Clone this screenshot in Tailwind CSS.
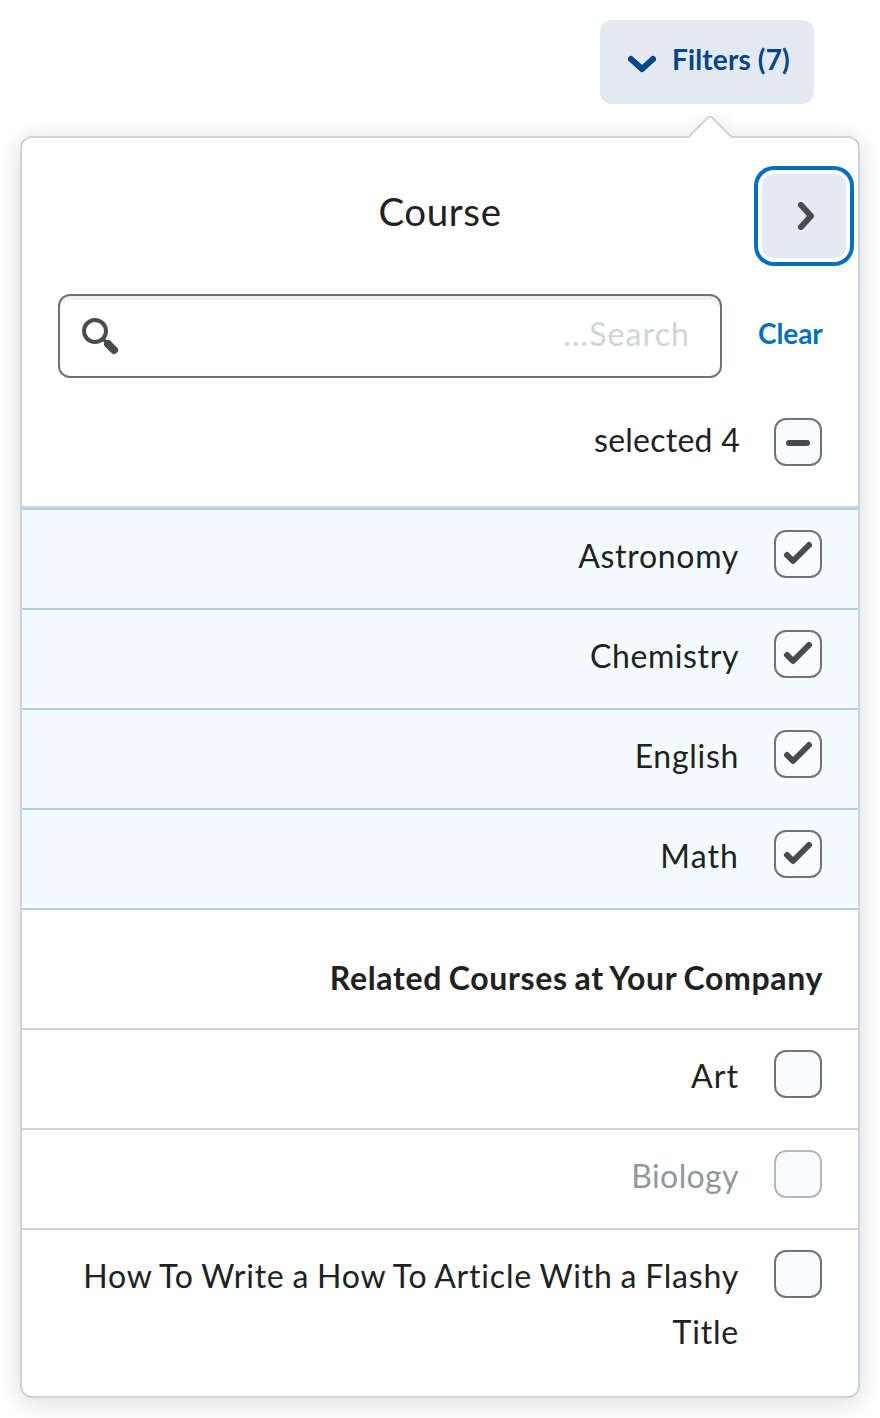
<!DOCTYPE html>
<html lang="en">
<head>
<meta charset="utf-8">
<title>Filters</title>
<script src="https://cdn.jsdelivr.net/npm/@tailwindcss/browser@4"></script>
</head>
<body class="h-[1418px] overflow-hidden bg-white font-['Lato',sans-serif] text-[32px] leading-[56px] tracking-[0.7px] text-[#202122]">
<main class="flex flex-col px-5 pt-5">
  <button class="mr-[46px] flex h-[84px] w-[214px] items-center self-end rounded-[12px] bg-[#e3e9f1] pl-7 text-[28px] font-bold tracking-[0.15px] text-[#004489]">
    <svg class="mt-1 h-[28px] w-[28px] shrink-0" viewBox="0 0 28 28" fill="none" stroke="#004489" stroke-width="6" stroke-linecap="round" stroke-linejoin="round"><path d="M3 9l11 10L25 9"/></svg>
    <span class="ml-4 whitespace-nowrap pb-[6px]">Filters (7)</span>
  </button>
  <section class="relative mt-8 flex h-[1262px] flex-col rounded-[12px] border-2 border-[#cdd5dc] bg-white shadow-[0_4px_24px_rgba(0,0,0,0.15)]">
    <div class="absolute -top-[26px] left-[664px] h-[26px] w-[48px] overflow-hidden">
      <div class="absolute left-[7px] top-[9px] h-[34px] w-[34px] rotate-45 rounded-[5px] border-2 border-[#cdd5dc] bg-white shadow-[-8px_-8px_24px_-10px_rgba(73,76,78,0.2)]"></div>
    </div>
    <header class="grid h-[156px] grid-cols-[1fr_auto_1fr] items-center px-3">
      <h1 class="col-start-2 pb-[10px] text-[38.5px] tracking-[0.6px]">Course</h1>
      <button class="flex h-[84px] w-[84px] items-center justify-center justify-self-end rounded-[12px] bg-[#e3e9f1] shadow-[0_0_0_4px_#fff,0_0_0_8px_#006fbf]">
        <svg class="ml-[3px] h-[28px] w-[28px]" viewBox="0 0 28 28" fill="none" stroke="#494c4e" stroke-width="6" stroke-linecap="round" stroke-linejoin="round"><path d="M9 3l10 11L9 25"/></svg>
      </button>
    </header>
    <div class="flex items-center gap-9 px-9">
      <div class="flex h-[84px] w-[664px] shrink-0 items-center justify-between rounded-[12px] border-2 border-[#6e7376] pl-[20px] pr-[30px] shadow-[inset_0_4px_0_#f0f1f3]">
        <svg class="h-10 w-10" viewBox="0 0 40 40" fill="none" stroke="#494c4e"><circle cx="15" cy="15" r="11" stroke-width="4"/><path d="M22.500 22.500l5 5" stroke-width="3.500"/><path d="M28 28l6 6" stroke-width="8" stroke-linecap="round"/></svg>
        <span class="pb-1 tracking-[1.1px] text-[#cdd5dc]">...Search</span>
      </div>
      <a class="whitespace-nowrap pb-[6px] text-[28px] font-bold tracking-[-0.1px] text-[#006fbf]">Clear</a>
    </div>
    <div class="flex h-[130px] items-start justify-end gap-[34px] border-b-2 border-[#cdd5dc] px-9 pt-10">
      <span class="-mt-[6px] tracking-[0.25px]">selected 4</span>
      <div class="flex h-12 w-12 items-center justify-center rounded-[12px] border-2 border-[#6e7376] bg-[#f9fbff]"><div class="mt-[2px] h-[6px] w-6 rounded-[3px] bg-[#494c4e]"></div></div>
    </div>
    <ul class="border-t-2 border-[#b5cbe6]">
      <li class="flex h-[100px] justify-end gap-[35px] border-b-2 border-[#b5cbe6] bg-[#f3fbff] px-9 pt-5"><span class="-mt-[2px]">Astronomy</span><div class="h-12 w-12 shrink-0 rounded-[12px] border-2 border-[#6e7376] bg-[#f9fbff]"><svg class="h-11 w-11" viewBox="0 0 44 44" fill="none" stroke="#494c4e" stroke-width="6" stroke-linecap="round" stroke-linejoin="round"><path d="M11 23l6 6 16-16"/></svg></div></li>
      <li class="flex h-[100px] justify-end gap-[35px] border-b-2 border-[#b5cbe6] bg-[#f3fbff] px-9 pt-5"><span class="-mt-[2px] tracking-[0.6px]">Chemistry</span><div class="h-12 w-12 shrink-0 rounded-[12px] border-2 border-[#6e7376] bg-[#f9fbff]"><svg class="h-11 w-11" viewBox="0 0 44 44" fill="none" stroke="#494c4e" stroke-width="6" stroke-linecap="round" stroke-linejoin="round"><path d="M11 23l6 6 16-16"/></svg></div></li>
      <li class="flex h-[100px] justify-end gap-[35px] border-b-2 border-[#b5cbe6] bg-[#f3fbff] px-9 pt-5"><span class="-mt-[2px]">English</span><div class="h-12 w-12 shrink-0 rounded-[12px] border-2 border-[#6e7376] bg-[#f9fbff]"><svg class="h-11 w-11" viewBox="0 0 44 44" fill="none" stroke="#494c4e" stroke-width="6" stroke-linecap="round" stroke-linejoin="round"><path d="M11 23l6 6 16-16"/></svg></div></li>
      <li class="flex h-[100px] justify-end gap-[35px] border-b-2 border-[#b5cbe6] bg-[#f3fbff] px-9 pt-5"><span class="-mt-[2px] tracking-[1.1px]">Math</span><div class="h-12 w-12 shrink-0 rounded-[12px] border-2 border-[#6e7376] bg-[#f9fbff]"><svg class="h-11 w-11" viewBox="0 0 44 44" fill="none" stroke="#494c4e" stroke-width="6" stroke-linecap="round" stroke-linejoin="round"><path d="M11 23l6 6 16-16"/></svg></div></li>
    </ul>
    <h2 class="h-[120px] border-b-2 border-[#cdd5dc] pr-[35px] pt-10 text-right font-bold tracking-[0.65px] [word-spacing:-1.6px]">Related Courses at Your Company</h2>
    <ul>
      <li class="flex h-[100px] justify-end gap-[35px] border-b-2 border-[#cdd5dc] px-9 pt-5"><span class="-mt-[2px] tracking-[1.1px]">Art</span><div class="h-12 w-12 shrink-0 rounded-[12px] border-2 border-[#6e7376] bg-[#f9fbff]"></div></li>
      <li class="flex h-[100px] justify-end gap-[35px] border-b-2 border-[#cdd5dc] px-9 pt-5"><span class="-mt-[2px] tracking-[0.4px] text-[#90989d]">Biology</span><div class="h-12 w-12 shrink-0 rounded-[12px] border-2 border-[#b4b8bb] bg-[#f9fbff]"></div></li>
      <li class="flex justify-end gap-[35px] px-9 pt-5"><span class="-mt-[2px] text-right tracking-[0.8px] [word-spacing:-1.1px]">How To Write a How To Article With a Flashy Title</span><div class="h-12 w-12 shrink-0 rounded-[12px] border-2 border-[#6e7376] bg-[#f9fbff]"></div></li>
    </ul>
  </section>
</main>
</body>
</html>
